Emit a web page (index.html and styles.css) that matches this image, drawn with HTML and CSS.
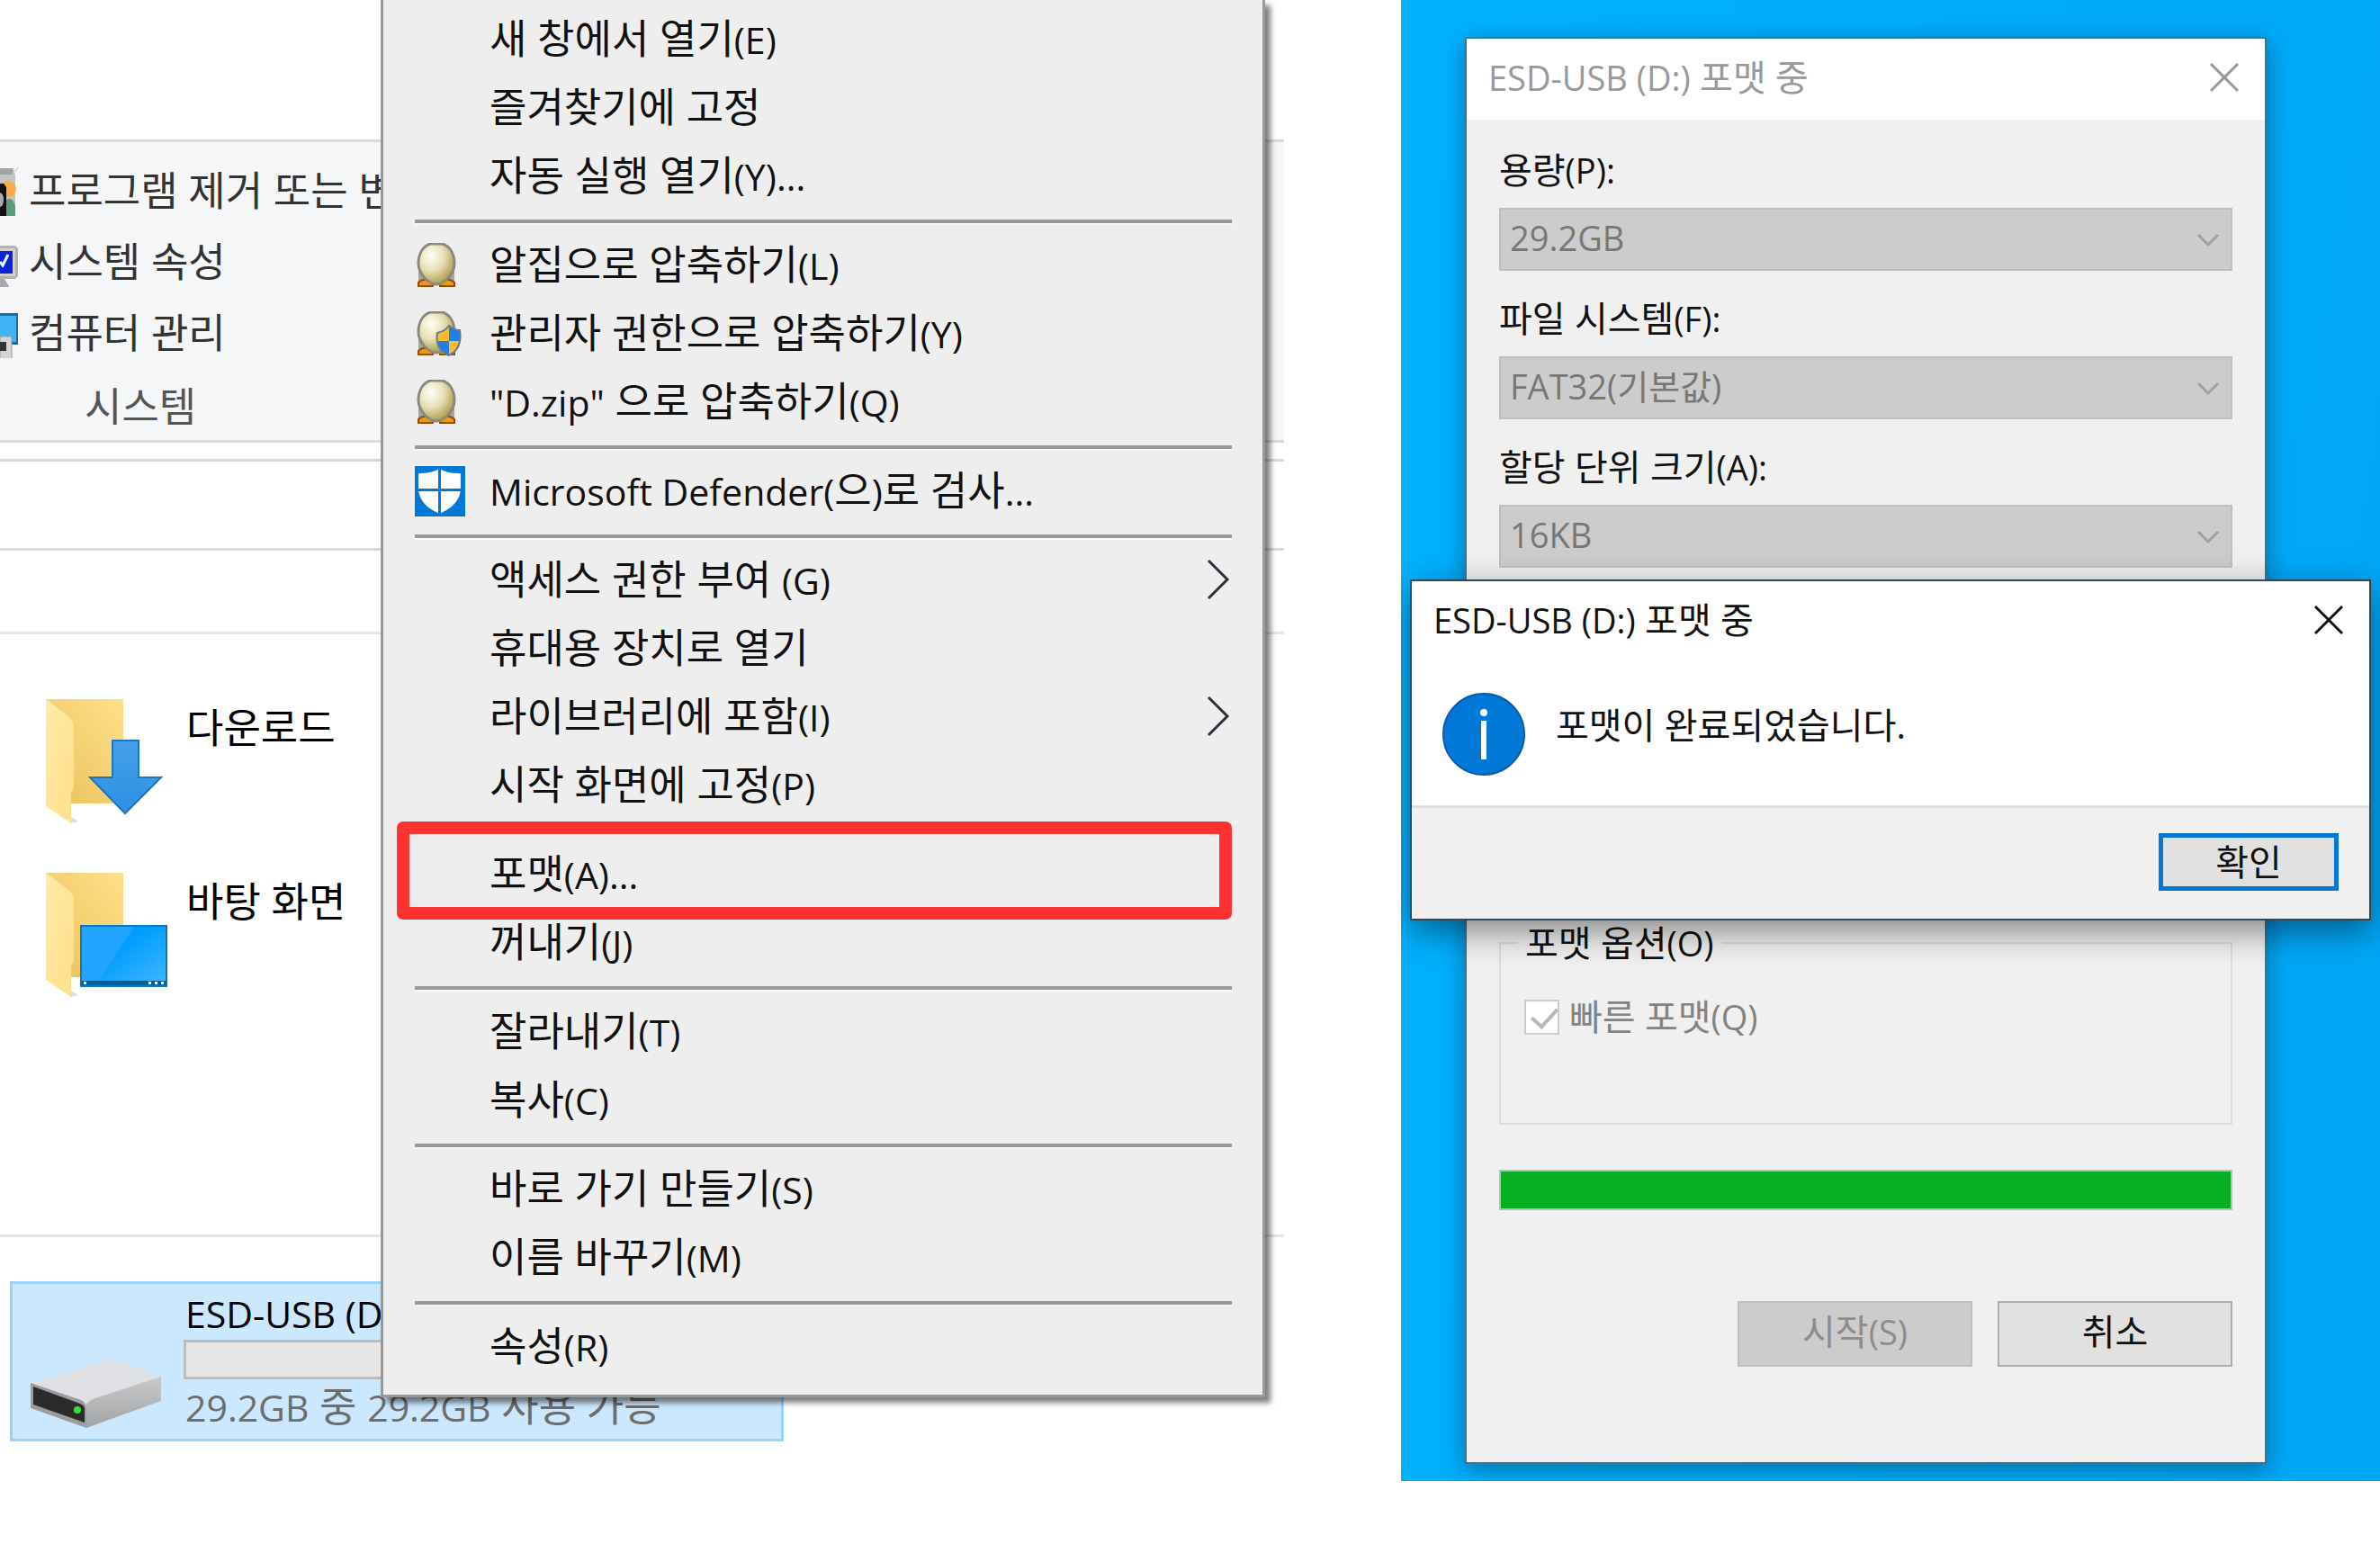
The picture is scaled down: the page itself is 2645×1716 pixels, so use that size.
FILE: index.html
```html
<!DOCTYPE html>
<html lang="ko">
<head>
  <meta charset="UTF-8" />
  <meta name="viewport" content="width=device-width, initial-scale=1.0"/>
  <title>USB 포맷</title>
  <link rel="stylesheet" href="styles.css">
</head>
<body>

<!-- shared icons -->
<svg class="defs" width="0" height="0" aria-hidden="true">
  <defs>
    <linearGradient id="folder-back" x1="0" y1="1" x2="1" y2="0">
      <stop offset="0" stop-color="#e8c15a"/>
      <stop offset="1" stop-color="#ffe08a"/>
    </linearGradient>
    <linearGradient id="folder-front" x1="0" y1="0" x2="1" y2="1">
      <stop offset="0" stop-color="#ffeaa8"/>
      <stop offset="1" stop-color="#ffdf8a"/>
    </linearGradient>
    <linearGradient id="arrow-fill" x1="0" y1="0" x2="0" y2="1">
      <stop offset="0" stop-color="#45a0ea"/>
      <stop offset="1" stop-color="#2b90e2"/>
    </linearGradient>
    <linearGradient id="screen-fill" x1="0" y1="0" x2="1" y2="1">
      <stop offset="0.4" stop-color="#009dff"/>
      <stop offset="1" stop-color="#46b6ff"/>
    </linearGradient>
    <linearGradient id="drive-side" x1="0" y1="0" x2="0" y2="1">
      <stop offset="0" stop-color="#c8c9cb"/>
      <stop offset="1" stop-color="#a3a4a6"/>
    </linearGradient>
    <radialGradient id="egg-fill" cx="0.35" cy="0.3" r="0.75">
      <stop offset="0" stop-color="#fffff6"/>
      <stop offset="0.5" stop-color="#e6deb4"/>
      <stop offset="1" stop-color="#a8943e"/>
    </radialGradient>
    <symbol id="folder" viewBox="0 0 86 142">
      <path d="M0 0H86V116H28L0 90Z" fill="url(#folder-back)"/>
      <path d="M28 138l8-2-8-5z" fill="#ddd"/>
      <path d="M0 0L26 20Q31 24 31 30V98L28 104V138L0 119Z" fill="url(#folder-front)"/>
    </symbol>
    <symbol id="egg" viewBox="0 0 56 50">
      <path d="M4 24V46H44V24Z" fill="#a9a69c"/>
      <path d="M4 48V44Q8 40 14 41L20 46V48ZM28 48V46L34 41Q40 40 44 44V48Z" fill="#f09a14" stroke="#8a4f10" stroke-width="2"/>
      <path d="M17 1H31C39 4 44 12 44 23C44 34 33 46 24 46S4 34 4 23C4 12 9 4 17 1Z" fill="url(#egg-fill)" stroke="#8a8880" stroke-width="3"/>
    </symbol>
  </defs>
</svg>

<main class="page">
  <!-- File explorer -->
  <section class="explorer">
    <div class="ribbon">
      <button class="ribbon-item">
        <svg class="ribbon-icon" viewBox="0 0 20 56">
          <path d="M0 3h15l2 8v46H0z" fill="#c4c4c0"/>
          <path d="M0 3h14v7H0z" fill="#a3a3a3"/>
          <circle cx="9" cy="26" r="9" fill="#f9ab45"/>
          <path d="M7 38q8-4 10 8v11H7z" fill="#5d9a79"/>
          <path d="M0 20h4l3 4v32H0z" fill="#111"/>
          <path d="M0 30q4 1 4 8t-4 8z" fill="#aaa"/>
          <path d="M17 7l3-5" stroke="#bbb"/>
        </svg>
        <span>프로그램 제거 또는 변경</span>
      </button>
      <button class="ribbon-item">
        <svg class="ribbon-icon" viewBox="0 0 20 56">
          <path d="M0 10h17l3 3v31l-3 3H0z" fill="#b5b2ab"/>
          <path d="M0 13h17v31H0z" fill="#d3d0c9"/>
          <path d="M0 16h14v25H0z" fill="#0a25d8"/>
          <path d="M0 28l3 4 6-12" fill="none" stroke="#fff" stroke-width="3"/>
          <path d="M0 47h5l6 10H0z" fill="#a9a9a9"/>
        </svg>
        <span>시스템 속성</span>
      </button>
      <button class="ribbon-item">
        <svg class="ribbon-icon" viewBox="0 0 20 56">
          <path d="M0 6h20v35H0z" fill="#1d6d96"/>
          <path d="M0 9h18v29H0z" fill="#3fb3f5"/>
          <path d="M0 32h13v25H0z" fill="#d4d4d4" stroke="#999"/>
          <path d="M0 38h7v10H0z" fill="#333"/>
        </svg>
        <span>컴퓨터 관리</span>
      </button>
      <div class="ribbon-group">시스템</div>
    </div>
    <div class="address-bar"></div>
    <div class="column-bar"></div>

    <div class="folders">
      <a class="folder" href="#">
        <svg class="folder-icon" viewBox="0 0 140 142">
          <use href="#folder" width="86" height="142"/>
          <path d="M74 46H103V87H128L88 127L49 87H74Z" fill="url(#arrow-fill)" stroke="#1d76bd" stroke-width="2"/>
        </svg>
        <span>다운로드</span>
      </a>
      <a class="folder" href="#">
        <svg class="folder-icon" viewBox="0 0 140 142">
          <use href="#folder" width="86" height="142"/>
          <path d="M39 59h95v67H39z" fill="url(#screen-fill)"/>
          <path d="M39 59h60L57 122H39z" fill="#21a5ff"/>
          <path d="M39 120h95v6H39z" fill="#00609f"/>
          <path d="M39 59h95v67H39z" fill="none" stroke="#0b78be" stroke-width="2"/>
          <path d="M42 121h3v3h-3zM114 121h3v3h-3zM121 121h3v3h-3zM128 121h3v3h-3z" fill="#fff"/>
        </svg>
        <span>바탕 화면</span>
      </a>
    </div>

    <div class="drives">
      <div class="drive">
        <svg class="drive-icon" viewBox="0 0 146 76">
          <path d="M0 27L87 0Q102 0 145 20L62 52Z" fill="#dfe0e3"/>
          <path d="M62 50Q64 46 72 43L145 19V46L62 76Z" fill="url(#drive-side)"/>
          <path d="M0 26L56 45Q62 48 62 54V76L0 54Z" fill="#9b9c9e"/>
          <path d="M3 30L55 49Q60 51 60 55V70L3 50Z" fill="#2b2b2b"/>
          <ellipse cx="52" cy="56" rx="4" ry="4" fill="#35e03a"/>
        </svg>
        <div class="drive-info">
          <span class="drive-name"><small>ESD-USB (D:)</small></span>
          <div class="drive-meter"></div>
          <span class="drive-space"><small>29.2GB</small> 중 <small>29.2GB</small> 사용 가능</span>
        </div>
      </div>
    </div>

    <!-- Context menu -->
    <ul class="menu">
      <li><button>새 창에서 열기<small>(E)</small></button></li>
      <li><button>즐겨찾기에 고정</button></li>
      <li><button>자동 실행 열기<small>(Y)...</small></button></li>
      <li class="line"></li>
      <li><button><svg class="menu-icon" viewBox="0 0 56 50"><use href="#egg"/></svg>알집으로 압축하기<small>(L)</small></button></li>
      <li><button>
        <svg class="menu-icon" viewBox="0 0 56 50">
          <use href="#egg"/>
          <path d="M38 16Q43 21 50 21Q53 42 38 49Q22 42 25 24Q34 22 38 16Z" fill="#1e7fe8"/>
          <path d="M38 16V33H24Q24 28 25 24Q34 22 38 16ZM38 33H50Q48 45 38 49Z" fill="#fdbb2d"/>
          <path d="M38 16Q43 21 50 21Q53 42 38 49Q22 42 25 24Q34 22 38 16Z" fill="none" stroke="#5f7d96" stroke-width="2"/>
        </svg>관리자 권한으로 압축하기<small>(Y)</small></button></li>
      <li><button><svg class="menu-icon" viewBox="0 0 56 50"><use href="#egg"/></svg><small>"D.zip"</small> 으로 압축하기<small>(Q)</small></button></li>
      <li class="line"></li>
      <li><button>
        <svg class="menu-icon defender" viewBox="0 0 55 55">
          <path d="M0 0h55v55H0z" fill="#0078d7"/>
          <path d="M27 3Q35 8 50 8V24Q50 42 27 52Q4 42 4 24V8Q19 8 27 3Z" fill="#fff"/>
          <path d="M27 2V53M3 26H51" stroke="#0078d7" stroke-width="3"/>
        </svg><small>Microsoft Defender(</small>으<small>)</small>로 검사<small>...</small></button></li>
      <li class="line"></li>
      <li><button>액세스 권한 부여 <small>(G)</small><svg class="arrow" viewBox="0 0 26 46"><path d="M2 2L23 23L2 44"/></svg></button></li>
      <li><button>휴대용 장치로 열기</button></li>
      <li><button>라이브러리에 포함<small>(I)</small><svg class="arrow" viewBox="0 0 26 46"><path d="M2 2L23 23L2 44"/></svg></button></li>
      <li><button>시작 화면에 고정<small>(P)</small></button></li>
      <li class="line"></li>
      <li class="marked"><button>포맷<small>(A)...</small></button></li>
      <li><button>꺼내기<small>(J)</small></button></li>
      <li class="line"></li>
      <li><button>잘라내기<small>(T)</small></button></li>
      <li><button>복사<small>(C)</small></button></li>
      <li class="line"></li>
      <li><button>바로 가기 만들기<small>(S)</small></button></li>
      <li><button>이름 바꾸기<small>(M)</small></button></li>
      <li class="line"></li>
      <li><button>속성<small>(R)</small></button></li>
    </ul>
  </section>

  <!-- Desktop with format window -->
  <section class="desktop">
    <form class="window">
      <header class="title-bar">
        <span><small>ESD-USB (D:)</small> 포맷 중</span>
        <button type="button" class="close" aria-label="닫기"><svg viewBox="0 0 34 34"><path d="M2 2L32 32M32 2L2 32"/></svg></button>
      </header>
      <div class="window-body">
        <label for="capacity">용량<small>(P):</small></label>
        <div class="select-box">
          <select id="capacity" disabled><option>29.2GB</option></select>
          <svg viewBox="0 0 26 16"><path d="M2 2L13 13L24 2"/></svg>
        </div>
        <label for="filesystem">파일 시스템<small>(F):</small></label>
        <div class="select-box">
          <select id="filesystem" disabled><option>FAT32(기본값)</option></select>
          <svg viewBox="0 0 26 16"><path d="M2 2L13 13L24 2"/></svg>
        </div>
        <label for="unit">할당 단위 크기<small>(A):</small></label>
        <div class="select-box">
          <select id="unit" disabled><option>16KB</option></select>
          <svg viewBox="0 0 26 16"><path d="M2 2L13 13L24 2"/></svg>
        </div>
        <fieldset class="options">
          <legend>포맷 옵션<small>(O)</small></legend>
          <div class="check">
            <input type="checkbox" id="quick" checked disabled>
            <label for="quick">빠른 포맷<small>(Q)</small></label>
          </div>
        </fieldset>
        <progress class="progress" value="100" max="100" aria-label="진행률"></progress>
        <div class="buttons">
          <button type="button" disabled>시작<small>(S)</small></button>
          <button type="button">취소</button>
        </div>
      </div>
    </form>

    <!-- Done message -->
    <div class="dialog" role="dialog" aria-labelledby="dialog-title">
      <header class="title-bar">
        <span id="dialog-title"><small>ESD-USB (D:)</small> 포맷 중</span>
        <button type="button" class="close" aria-label="닫기"><svg viewBox="0 0 34 34"><path d="M2 2L32 32M32 2L2 32"/></svg></button>
      </header>
      <div class="dialog-body">
        <svg class="info-icon" viewBox="0 0 92 92">
          <circle cx="46" cy="46" r="45" fill="#0078d7" stroke="#0b5cab" stroke-width="2"/>
          <path d="M46 31V74" stroke="#fff" stroke-width="6"/>
          <circle cx="46" cy="22" r="4" fill="#fff"/>
        </svg>
        <p>포맷이 완료되었습니다.</p>
      </div>
      <footer class="dialog-footer">
        <button type="button">확인</button>
      </footer>
    </div>
  </section>
</main>

</body>
</html>
```
FILE: styles.css
```css
* {
  box-sizing: border-box;
}

body {
  margin: 0;
  background: white;
  color: #111;
  font-family: "Open Sans", "Noto Sans CJK KR", sans-serif;
  font-size: 45px;
}

button, select {
  font: inherit;
  color: inherit;
}

/* latin text runs a bit smaller than hangul */
small {
  font-size: 41px;
  line-height: 1;
}

.defs {
  position: absolute;
}

.page {
  display: grid;
  grid-template-columns: 1427fr 1088fr;
  column-gap: 130px;
  align-items: start;
}

/* explorer */
.explorer {
  position: relative;
  overflow: hidden;
  padding: 155px 0 40px;
}

.ribbon {
  display: flex;
  flex-direction: column;
  padding: 14px 0 7px;
  background: #f5f6f8;
  border-top: 3px solid #dadbdc;
  border-bottom: 3px solid #dadbdc;
}

.ribbon-item {
  display: flex;
  align-items: center;
  gap: 12px;
  height: 79px;
  padding: 0;
  background: none;
  border: none;
  color: #333;
  line-height: 60px;
  white-space: nowrap;
}

.ribbon-icon {
  width: 20px;
  height: 56px;
}

.ribbon-group {
  margin-top: 13px;
  padding-left: 94px;
  line-height: 60px;
  color: #555;
}

.address-bar {
  height: 102px;
  margin-top: 18px;
  border-top: 3px solid #d9d9d9;
  border-bottom: 3px solid #d9d9d9;
}

.column-bar {
  height: 93px;
  border-bottom: 3px solid #e5e5e5;
}

.folders {
  display: flex;
  flex-direction: column;
  gap: 51px;
  padding: 72px 0 260px 51px;
}

.folder {
  display: flex;
  align-items: flex-start;
  gap: 16px;
  color: black;
  text-decoration: none;
  line-height: 64px;
}

.folder-icon {
  width: 140px;
  height: 142px;
}

.drives {
  padding: 49px 0 0 11px;
  border-top: 3px solid #e5e5e5;
}

.drive {
  display: flex;
  align-items: flex-end;
  gap: 24px;
  width: 860px;
  height: 178px;
  padding: 0 20px 6px;
  background: #cce8ff;
  border: 3px solid #99d1ff;
}

.drive-icon {
  width: 146px;
  height: 76px;
  margin-bottom: 6px;
}

.drive-info {
  display: flex;
  flex: 1;
  flex-direction: column;
  line-height: 60px;
}

.drive-name, .drive-space {
  padding-left: 2px;
}

.drive-name {
  color: black;
}

.drive-meter {
  height: 44px;
  background: #e6e6e6;
  border: 3px solid #bcbcbc;
}

.drive-space {
  color: #6d6d6d;
}

/* context menu */
.menu {
  position: absolute;
  top: 0;
  left: 423px;
  width: 983px;
  margin: 0;
  padding: 5px 0 16px;
  list-style: none;
  background: #eee;
  border: 3px solid #999;
  border-top: none;
  box-shadow: 6px 6px 6px rgba(0,0,0,0.5);
}

.menu button {
  display: block;
  width: 100%;
  height: 76px;
  padding: 0 0 0 118px;
  background: none;
  border: none;
  line-height: 76px;
  text-align: left;
  white-space: nowrap;
}

.menu .line {
  height: 4px;
  margin: 11px 34px 8px 35px;
  background: #999;
  box-shadow: 0 2px 0 #f8f8f8;
}

.menu-icon {
  width: 56px;
  height: 50px;
  margin: 0 27px 8px -83px;
  vertical-align: middle;
}

.defender {
  height: 56px;
}

.arrow {
  float: right;
  width: 26px;
  height: 46px;
  margin: 15px 36px 0 0;
  fill: none;
  stroke: #2f2f3c;
  stroke-width: 3;
}

.marked {
  position: relative;
}

.marked::after {
  content: "";
  position: absolute;
  top: -20px;
  right: 34px;
  bottom: -13px;
  left: 15px;
  z-index: 1;
  border: 14px solid #ff3131;
  border-radius: 7px;
}

/* desktop */
.desktop {
  position: relative;
  overflow: hidden;
  padding: 41px 126px 19px 71px;
  font-size: 40px;
  background: linear-gradient(100deg, #00b2ff, #00a6f6);
}

.desktop small {
  font-size: 38px;
}

.window {
  background: #f0f0f0;
  border: 2px solid #2b7ba6;
  box-shadow: 0 6px 24px rgba(0,0,0,0.35);
}

.title-bar {
  display: flex;
  align-items: center;
  justify-content: space-between;
  height: 90px;
  padding: 0 28px 4px 24px;
  background: white;
  color: #999;
  line-height: 60px;
}

.close {
  display: flex;
  padding: 0;
  background: none;
  border: none;
}

.close svg {
  width: 34px;
  height: 34px;
  fill: none;
  stroke: currentColor;
  stroke-width: 3;
}

.window-body {
  display: flex;
  flex-direction: column;
  padding: 26px 36px 106px;
}

.window-body > label {
  line-height: 60px;
}

.select-box {
  position: relative;
  margin: 12px 0 23px;
}

.select-box select {
  display: block;
  width: 100%;
  height: 70px;
  padding: 0 10px 4px;
  appearance: none;
  background: #ccc;
  border: 2px solid #bfbfbf;
  border-radius: 0;
  color: #777;
  font-size: 38px;
  opacity: 1;
}

.select-box svg {
  position: absolute;
  top: 28px;
  right: 14px;
  width: 26px;
  height: 16px;
  fill: none;
  stroke: #a0a0a0;
  stroke-width: 3;
}

.options {
  height: 232px;
  margin: 364px 0 0;
  padding: 22px 26px;
  border: 2px solid #dcdcdc;
}

.options legend {
  margin-left: -8px;
  padding: 0 9px;
  line-height: 60px;
}

.check {
  display: flex;
  align-items: center;
  gap: 11px;
  line-height: 60px;
  color: #838383;
}

.check input {
  width: 39px;
  height: 39px;
  margin: 0;
  appearance: none;
  background: white;
  border: 2px solid #ccc;
}

.check input::after {
  content: "";
  display: block;
  width: 13px;
  height: 24px;
  margin: 1px 0 0 12px;
  border: solid #b8b8b8;
  border-width: 0 4px 4px 0;
  transform: rotate(42deg);
}

.progress {
  width: 100%;
  height: 45px;
  margin-top: 50px;
  appearance: none;
  border: 2px solid #bcbcbc;
}

.progress::-webkit-progress-bar {
  background: #e6e6e6;
}

.progress::-webkit-progress-value {
  background: #06b025;
}

.buttons {
  display: flex;
  justify-content: flex-end;
  gap: 28px;
  margin-top: 101px;
}

.buttons button {
  width: 261px;
  height: 73px;
  padding: 0 0 6px;
  background: #e1e1e1;
  border: 2px solid #adadad;
  line-height: 60px;
}

.buttons button:disabled {
  background: #ccc;
  border-color: #bfbfbf;
  color: #8c8c8c;
}

/* message */
.dialog {
  position: absolute;
  top: 644px;
  left: 10px;
  right: 10px;
  background: white;
  border: 2px solid #2c4a5a;
  box-shadow: 0 12px 36px rgba(0,0,0,0.45);
}

.dialog .title-bar {
  color: #111;
}

.dialog-body {
  display: flex;
  align-items: flex-start;
  gap: 34px;
  padding: 34px 34px 33px;
}

.info-icon {
  width: 92px;
  height: 92px;
}

.dialog-body p {
  margin: 6px 0 0;
  line-height: 60px;
}

.dialog-footer {
  display: flex;
  justify-content: flex-end;
  padding: 28px 34px 31px;
  background: #f0f0f0;
  border-top: 3px solid #dfdfdf;
}

.dialog-footer button {
  width: 200px;
  height: 64px;
  padding: 0;
  background: #e1e1e1;
  border: 5px solid #0078d7;
  line-height: 50px;
}
```
